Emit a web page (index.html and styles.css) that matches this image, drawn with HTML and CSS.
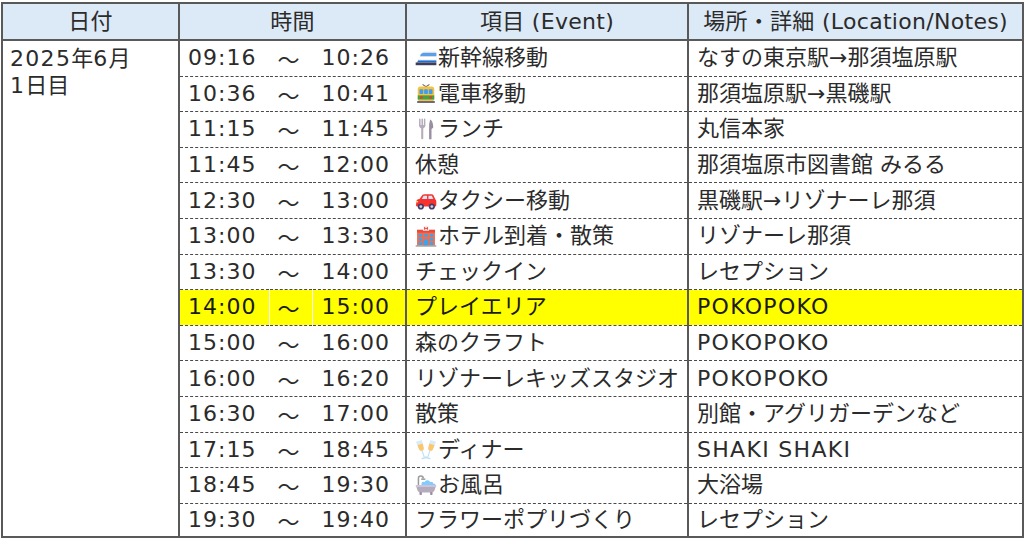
FILE: index.html
```html
<!DOCTYPE html>
<html lang="ja">
<head>
<meta charset="utf-8">
<link rel="stylesheet" href="styles.css">
</head>
<body>
<table class="sched">
  <colgroup>
    <col class="c-date">
    <col class="c-start">
    <col class="c-tilde">
    <col class="c-end">
    <col class="c-event">
    <col class="c-loc">
  </colgroup>
  <thead>
    <tr>
      <th>日付</th>
      <th colspan="3" class="th-time">時間</th>
      <th>項目 (Event)</th>
      <th>場所・詳細 (Location/Notes)</th>
    </tr>
  </thead>
  <tbody>
    <tr>
      <td rowspan="14" class="date"><span class="lat">2025</span>年<span class="lat">6</span>月<br><span class="lat">1</span>日目</td>
      <td class="t1">09:16</td><td class="t2">～</td><td class="t3">10:26</td>
      <td class="ev"><svg class="ico" viewBox="0 0 32 32"><path d="M1 26 L9 10 Q10.5 7 14 7 L31 7 L31 26 Z" fill="#d8dce6"/><path d="M6.8 14.5 L31 14.5 L31 18.5 L5 18.5 Z" fill="#ffffff"/><path d="M8.6 10.5 Q10 8.6 12.5 8.6 L31 8.6 L31 13 L7.6 13 Z" fill="#5aa0e8"/><path d="M4.5 19.5 L31 19.5 L31 22 L3.3 22 Z" fill="#1c6fd6"/><rect x="1" y="22.5" width="30" height="4" fill="#3b3f5c"/></svg>新幹線移動</td>
      <td>なすの東京駅→那須塩原駅</td>
    </tr>
    <tr>
      <td class="t1">10:36</td><td class="t2">～</td><td class="t3">10:41</td>
      <td class="ev"><svg class="ico" viewBox="0 0 32 32"><path d="M11 2 L16 5.5 L21 2" stroke="#6b6b7b" stroke-width="1.5" fill="none"/><rect x="4" y="5" width="24" height="22" rx="4" fill="#f9c23c"/><rect x="4" y="18" width="24" height="6" fill="#44a24a"/><rect x="6.5" y="9" width="5.5" height="7" rx="1" fill="#3f9df5"/><rect x="13.25" y="9" width="5.5" height="7" rx="1" fill="#3f9df5"/><rect x="20" y="9" width="5.5" height="7" rx="1" fill="#3f9df5"/><rect x="7.5" y="19.5" width="3.5" height="3" fill="#f8312f"/><rect x="21" y="19.5" width="3.5" height="3" fill="#f8312f"/><rect x="3" y="26" width="26" height="3" rx="1" fill="#6b6b7b"/></svg>電車移動</td>
      <td>那須塩原駅→黒磯駅</td>
    </tr>
    <tr>
      <td class="t1">11:15</td><td class="t2">～</td><td class="t3">11:45</td>
      <td class="ev"><svg class="ico" viewBox="0 0 32 32"><path d="M7 2 L7 11 M10.5 2 L10.5 11 M14 2 L14 11" stroke="#b4acbc" stroke-width="2.2" stroke-linecap="round"/><path d="M6 10 Q6 15 10.5 15 Q15 15 15 10 Z" fill="#b4acbc"/><rect x="9" y="13" width="3" height="18" rx="1.5" fill="#b4acbc"/><path d="M22 2 Q26.5 4 26.5 14 L24 16 L24 31 L20.5 31 L20.5 16 Q20 8 22 2 Z" fill="#998ea4"/></svg>ランチ</td>
      <td>丸信本家</td>
    </tr>
    <tr>
      <td class="t1">11:45</td><td class="t2">～</td><td class="t3">12:00</td>
      <td>休憩</td>
      <td>那須塩原市図書館 みるる</td>
    </tr>
    <tr>
      <td class="t1">12:30</td><td class="t2">～</td><td class="t3">13:00</td>
      <td class="ev"><svg class="ico" viewBox="0 0 32 32"><path d="M2 17 Q2 13 6.5 13 L11 7 Q12 6 14 6 L24 6 Q26 6 27 8 L29.5 13.5 Q31 15 31 17 L31 22 Q31 24 29 24 L3 24 Q1 24 1.5 21 Z" fill="#f8312f"/><path d="M12.5 8.5 L17.5 8.5 L17.5 13 L9.8 13 Z" fill="#d3e6f5"/><path d="M19.5 8.5 L24.5 8.5 L26.7 13 L19.5 13 Z" fill="#d3e6f5"/><circle cx="8.5" cy="24" r="4.5" fill="#433b6b"/><circle cx="8.5" cy="24" r="2" fill="#d3d3d3"/><circle cx="24.5" cy="24" r="4.5" fill="#433b6b"/><circle cx="24.5" cy="24" r="2" fill="#d3d3d3"/><rect x="1.5" y="16" width="3" height="2" fill="#ffd679"/></svg>タクシー移動</td>
      <td>黒磯駅→リゾナーレ那須</td>
    </tr>
    <tr>
      <td class="t1">13:00</td><td class="t2">～</td><td class="t3">13:30</td>
      <td class="ev"><svg class="ico" viewBox="0 0 32 32"><rect x="3" y="7" width="26" height="23" fill="#f26d4f"/><rect x="3" y="7" width="26" height="4" fill="#e94a3a"/><rect x="11.5" y="1" width="9" height="7.5" rx="1" fill="#f4f4f4"/><path d="M14 2.8 L14 7 M18 2.8 L18 7 M14 4.9 L18 4.9" stroke="#f8312f" stroke-width="1.3"/><rect x="5.5" y="13" width="5" height="4" fill="#3fa3e8"/><rect x="13.5" y="13" width="5" height="4" fill="#3fa3e8"/><rect x="21.5" y="13" width="5" height="4" fill="#3fa3e8"/><rect x="5.5" y="19" width="5" height="4" fill="#3fa3e8"/><rect x="21.5" y="19" width="5" height="4" fill="#3fa3e8"/><rect x="5.5" y="25" width="5" height="4" fill="#3fa3e8"/><rect x="21.5" y="25" width="5" height="4" fill="#3fa3e8"/><rect x="12.5" y="21" width="7" height="9" fill="#3fa3e8"/><rect x="1" y="29.5" width="30" height="2" fill="#9b9b9b"/></svg>ホテル到着・散策</td>
      <td>リゾナーレ那須</td>
    </tr>
    <tr>
      <td class="t1">13:30</td><td class="t2">～</td><td class="t3">14:00</td>
      <td>チェックイン</td>
      <td>レセプション</td>
    </tr>
    <tr class="hl">
      <td class="t1">14:00</td><td class="t2">～</td><td class="t3">15:00</td>
      <td>プレイエリア</td>
      <td><span class="lat">POKOPOKO</span></td>
    </tr>
    <tr>
      <td class="t1">15:00</td><td class="t2">～</td><td class="t3">16:00</td>
      <td>森のクラフト</td>
      <td><span class="lat">POKOPOKO</span></td>
    </tr>
    <tr>
      <td class="t1">16:00</td><td class="t2">～</td><td class="t3">16:20</td>
      <td>リゾナーレキッズスタジオ</td>
      <td><span class="lat">POKOPOKO</span></td>
    </tr>
    <tr>
      <td class="t1">16:30</td><td class="t2">～</td><td class="t3">17:00</td>
      <td>散策</td>
      <td>別館・アグリガーデンなど</td>
    </tr>
    <tr>
      <td class="t1">17:15</td><td class="t2">～</td><td class="t3">18:45</td>
      <td class="ev"><svg class="ico" viewBox="0 0 32 32"><g transform="rotate(-18 10 16)"><path d="M5.5 2 L14.5 2 L13.5 14 Q13 17.5 10 17.5 Q7 17.5 6.5 14 Z" fill="#d6ecfa"/><path d="M6.1 7.5 L13.9 7.5 L13.5 14 Q13 17 10 17 Q7 17 6.5 14 Z" fill="#ffc56b"/><rect x="9.2" y="17" width="1.6" height="10.5" fill="#bfe0f5"/><rect x="5.5" y="27" width="9" height="2.2" rx="1" fill="#bfe0f5"/></g><g transform="rotate(18 22 16)"><path d="M17.5 2 L26.5 2 L25.5 14 Q25 17.5 22 17.5 Q19 17.5 18.5 14 Z" fill="#d6ecfa"/><path d="M18.1 7.5 L25.9 7.5 L25.5 14 Q25 17 22 17 Q19 17 18.5 14 Z" fill="#ffc56b"/><rect x="21.2" y="17" width="1.6" height="10.5" fill="#bfe0f5"/><rect x="17.5" y="27" width="9" height="2.2" rx="1" fill="#bfe0f5"/></g></svg>ディナー</td>
      <td><span class="lat">SHAKI SHAKI</span></td>
    </tr>
    <tr>
      <td class="t1">18:45</td><td class="t2">～</td><td class="t3">19:30</td>
      <td class="ev"><svg class="ico" viewBox="0 0 32 32"><path d="M5 16 L5 6 Q5 3 8.5 3 Q12 3 12 6.5" stroke="#9b9b9b" stroke-width="2.2" fill="none"/><path d="M9 7.5 L15 7.5" stroke="#9b9b9b" stroke-width="2.2"/><circle cx="12.5" cy="14.5" r="3.2" fill="#83cbff"/><circle cx="18" cy="13" r="4" fill="#83cbff"/><circle cx="23.5" cy="14.5" r="3.2" fill="#83cbff"/><circle cx="27.5" cy="16" r="2.2" fill="#83cbff"/><path d="M1.5 17 L30.5 17 L28.5 23.5 Q27.5 27 23 27 L9 27 Q4.5 27 3.5 23.5 Z" fill="#b4acbc"/><rect x="1" y="16" width="30" height="2.8" rx="1" fill="#cdc4d6"/><rect x="6.5" y="26" width="3.5" height="4.5" rx="1" fill="#998ea4"/><rect x="22" y="26" width="3.5" height="4.5" rx="1" fill="#998ea4"/></svg>お風呂</td>
      <td>大浴場</td>
    </tr>
    <tr class="last">
      <td class="t1">19:30</td><td class="t2">～</td><td class="t3">19:40</td>
      <td>フラワーポプリづくり</td>
      <td>レセプション</td>
    </tr>
  </tbody>
</table>
</body>
</html>
```

FILE: styles.css
```css
html, body {
  margin: 0;
  padding: 0;
  background: #ffffff;
}
body {
  padding: 2px 0 0 1px;
  font-family: "DejaVu Sans", "Noto Sans CJK JP", sans-serif;
  color: #2b2b2b;
}
.sched {
  border-collapse: collapse;
  table-layout: fixed;
  width: 1021px;
  font-size: 22px;
  border: 2px solid #595959;
}
.c-date { width: 177px; }
.c-start { width: 90px; }
.c-tilde { width: 43px; }
.c-end { width: 94px; }
.c-event { width: 282px; }
.c-loc { width: 335px; }

.sched th {
  background: #dce9f6;
  font-weight: normal;
  height: 35px;
  padding: 0;
  text-align: center;
  border: 2px solid #595959;
  line-height: 1;
  letter-spacing: 0.3px;
}
.sched td {
  height: 34.6px;
  padding: 0 0 0 8px;
  line-height: 1;
  white-space: nowrap;
  border-left: 2px solid #595959;
  border-right: 2px solid #595959;
  border-top: 1px dashed #4a4a4a;
  border-bottom: 1px dashed #4a4a4a;
  vertical-align: middle;
  letter-spacing: 0;
}
.lat {
  letter-spacing: 1.3px;
}
.sched td.date {
  vertical-align: top;
  line-height: 27px;
  padding-top: 4px;
  padding-left: 7px;
  border-bottom: 2px solid #595959;
}
.sched td.t1 {
  border-right: 1px solid #ffffff;
  letter-spacing: 1px;
}
.sched td.t2 {
  border-left: 1px solid #ffffff;
  border-right: 1px solid #ffffff;
  padding: 0 4px 0 0;
  text-align: center;
  font-family: "Noto Sans CJK JP", sans-serif;
}
.sched td.t3 {
  border-left: 1px solid #ffffff;
  padding-left: 9px;
  letter-spacing: 1px;
}
.sched tr.last td {
  height: 32.5px;
  border-bottom: 2px solid #595959;
}
.sched tr.hl td {
  background: #ffff00;
  color: #1a1a1a;
}
.ev {
  padding-left: 6px;
}
.ico {
  width: 22px;
  height: 22px;
  vertical-align: -4px;
  margin-right: 1px;
}
```
